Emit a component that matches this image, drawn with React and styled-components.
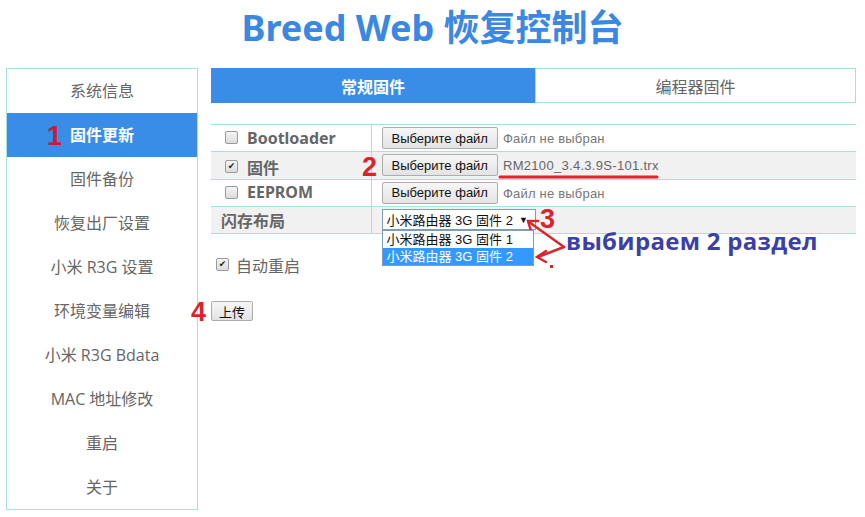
import React from 'react';
import styled, { createGlobalStyle } from 'styled-components';

const Global = createGlobalStyle`
  html, body { margin: 0; padding: 0; background: #fff; }
  body { font-family: "Noto Sans", "Noto Sans CJK SC", sans-serif; }
`;

const teal = '#a3e3da';
const blue = '#3a8de6';

const Page = styled.div`
  position: relative;
  width: 865px;
  height: 517px;
  overflow: hidden;
`;

const Title = styled.h1`
  margin: 0;
  height: 68px;
  line-height: 56px;
  text-align: center;
  font-family: "Noto Sans", "Noto Sans CJK SC", sans-serif;
  font-size: 36px;
  font-weight: 700;
  color: #3b88e2;
`;

const Main = styled.div`
  display: flex;
  gap: 13px;
  padding: 0 9px 0 6px;
`;

const Sidebar = styled.ul`
  list-style: none;
  margin: 0;
  padding: 0;
  width: 190px;
  border: 1px solid ${teal};
`;

const NavItem = styled.li`
  height: 44px;
  box-sizing: border-box;
  padding-bottom: 3px;
  display: flex;
  align-items: center;
  justify-content: center;
  font-family: "Open Sans", "Noto Sans CJK SC", sans-serif;
  font-size: 16px;
  color: ${p => (p.$active ? '#fff' : '#666')};
  background: ${p => (p.$active ? blue : '#fff')};
  font-weight: ${p => (p.$active ? 700 : 400)};
`;

const Content = styled.div`
  flex: 1;
  position: relative;
`;

const Tabs = styled.div`
  display: flex;
  height: 35px;
`;

const Tab = styled.div`
  display: flex;
  align-items: center;
  justify-content: center;
  font-size: 16px;
  box-sizing: border-box;
  ${p => p.$active
    ? `width: 324px; background: ${blue}; color: #fff; font-weight: 700;`
    : `flex: 1; border: 1px solid ${teal}; color: #666;`}
`;

const Table = styled.table`
  margin-top: 21px;
  width: 100%;
  border-collapse: collapse;
`;

const Row = styled.tr`
  height: 27px;
  background: ${p => (p.$shade ? '#f1f1f1' : '#fff')};
  border-top: 1px solid ${teal};
  border-bottom: 1px solid ${teal};
`;

const LabelCell = styled.td`
  width: 160px;
  padding: 0 0 0 ${p => (p.$plain ? '10px' : '14px')};
  box-sizing: border-box;
  border-right: 1px solid ${teal};
  font-size: 16px;
  font-weight: 700;
  color: #666;
  white-space: nowrap;
`;

const Label = styled.span`
  display: inline-flex;
  align-items: center;
  gap: 9px;
`;

const ValueCell = styled.td`
  padding: 0 0 0 10px;
  font-family: "Liberation Sans", Arial, sans-serif;
  font-size: 13px;
  color: #777;
  white-space: nowrap;
`;

const Box = styled.span`
  display: inline-flex;
  align-items: center;
  justify-content: center;
  width: 11px;
  height: 11px;
  border: 1px solid #9a9a9a;
  border-radius: 2px;
  background: linear-gradient(#f4f4f4, #dcdcdc);
  font-size: 9px;
  line-height: 1;
  color: #222;
  font-family: "DejaVu Sans", sans-serif;
`;

const FileButton = styled.button`
  height: 22px;
  padding: 0 9px;
  margin-right: 5px;
  border: 1px solid #adadad;
  border-radius: 2px;
  background: linear-gradient(#f6f6f6, #e3e3e3);
  font-family: "Liberation Sans", Arial, sans-serif;
  font-size: 13px;
  color: #111;
  vertical-align: middle;
`;

const FileName = styled.span`
  vertical-align: middle;
  color: ${p => (p.$chosen ? '#666' : '#777')};
  letter-spacing: ${p => (p.$chosen ? '0.3px' : '0.2px')};
`;

const SelectWrap = styled.div`
  position: relative;
  display: inline-block;
  vertical-align: middle;
`;

const Select = styled.div`
  width: 148px;
  height: 19px;
  box-sizing: content-box;
  border: 1px solid #7f9db9;
  background: #fff;
  display: flex;
  align-items: center;
  padding-left: 4px;
  font-family: "Liberation Sans", "Noto Sans CJK SC", sans-serif;
  font-size: 13px;
  color: #111;
  gap: 6px;
`;

const Caret = styled.span`
  font-size: 9px;
`;

const Dropdown = styled.ul`
  position: absolute;
  left: 0;
  top: 21px;
  width: 150px;
  margin: 0;
  padding: 0;
  list-style: none;
  border: 1px solid #7f9db9;
  background: #fff;
  z-index: 2;
`;

const Option = styled.li`
  height: 17px;
  line-height: 17px;
  padding-left: 4px;
  font-family: "Liberation Sans", "Noto Sans CJK SC", sans-serif;
  font-size: 13px;
  color: ${p => (p.$sel ? '#fff' : '#111')};
  background: ${p => (p.$sel ? '#3399ff' : '#fff')};
`;

const AutoRow = styled.div`
  display: flex;
  align-items: center;
  gap: 7px;
  margin: 19px 0 0 5px;
  font-size: 16px;
  color: #666;
`;

const Upload = styled.button`
  margin-top: 24px;
  height: 20px;
  width: 42px;
  padding: 0;
  border: 1px solid #adadad;
  border-radius: 2px;
  background: linear-gradient(#f6f6f6, #e3e3e3);
  font-family: "Noto Sans CJK SC", sans-serif;
  font-size: 13px;
  color: #111;
`;

const Mark = styled.span`
  position: absolute;
  left: ${p => p.$x}px;
  top: ${p => p.$y}px;
  font-family: "Liberation Sans", Arial, sans-serif;
  font-weight: 700;
  font-size: 27px;
  line-height: 1;
  color: ${p => p.$color || '#d7262b'};
`;

const Note = styled.span`
  position: absolute;
  left: 566px;
  top: 227px;
  font-family: "Open Sans", "Noto Sans", sans-serif;
  font-weight: 700;
  font-size: 24px;
  letter-spacing: 0.3px;
  color: #3b3fa6;
  line-height: 1.2;
`;

const Overlay = styled.svg`
  position: absolute;
  left: 0;
  top: 0;
  pointer-events: none;
`;

const Check = ({ on }) => <Box>{on ? '✔' : ''}</Box>;

const nav = [
  '系统信息', '固件更新', '固件备份', '恢复出厂设置', '小米 R3G 设置',
  '环境变量编辑', '小米 R3G Bdata', 'MAC 地址修改', '重启', '关于',
];

export default function App() {
  return (
    <Page>
      <Global />
      <Title>Breed Web 恢复控制台</Title>
      <Main>
        <Sidebar>
          {nav.map((n, i) => (
            <NavItem key={n} $active={i === 1}>{n}</NavItem>
          ))}
        </Sidebar>
        <Content>
          <Tabs>
            <Tab $active>常规固件</Tab>
            <Tab>编程器固件</Tab>
          </Tabs>
          <Table>
            <tbody>
              <Row>
                <LabelCell><Label><Check />Bootloader</Label></LabelCell>
                <ValueCell><FileButton>Выберите файл</FileButton><FileName>Файл не выбран</FileName></ValueCell>
              </Row>
              <Row $shade>
                <LabelCell><Label><Check on />固件</Label></LabelCell>
                <ValueCell><FileButton>Выберите файл</FileButton><FileName $chosen>RM2100_3.4.3.9S-101.trx</FileName></ValueCell>
              </Row>
              <Row>
                <LabelCell><Label><Check />EEPROM</Label></LabelCell>
                <ValueCell><FileButton>Выберите файл</FileButton><FileName>Файл не выбран</FileName></ValueCell>
              </Row>
              <Row $shade>
                <LabelCell $plain>闪存布局</LabelCell>
                <ValueCell>
                  <SelectWrap>
                    <Select>小米路由器 3G 固件 2 <Caret>▼</Caret></Select>
                    <Dropdown>
                      <Option>小米路由器 3G 固件 1</Option>
                      <Option $sel>小米路由器 3G 固件 2</Option>
                    </Dropdown>
                  </SelectWrap>
                </ValueCell>
              </Row>
            </tbody>
          </Table>
          <AutoRow><Check on />自动重启</AutoRow>
          <Upload>上传</Upload>
        </Content>
      </Main>

      <Mark $x={47} $y={123} $color="#c41f3a">1</Mark>
      <Mark $x={362} $y={154}>2</Mark>
      <Mark $x={540} $y={206}>3</Mark>
      <Mark $x={191} $y={299}>4</Mark>
      <Note>выбираем 2 раздел</Note>
      <Overlay width="865" height="517">
        <line x1="500" y1="177" x2="657" y2="177" stroke="#e8202a" strokeWidth="3" strokeLinecap="round" />
        <g stroke="#d8262b" strokeWidth="2.5" fill="none" strokeLinecap="round">
          <line x1="564" y1="247" x2="529" y2="222" />
          <polyline points="531,231 528,221 538,221" />
          <line x1="564" y1="247" x2="538" y2="257" />
          <polyline points="546,251 537,257 546,262" />
        </g>
        <rect x="550" y="265" width="3" height="3" fill="#d8262b" />
      </Overlay>
    </Page>
  );
}
